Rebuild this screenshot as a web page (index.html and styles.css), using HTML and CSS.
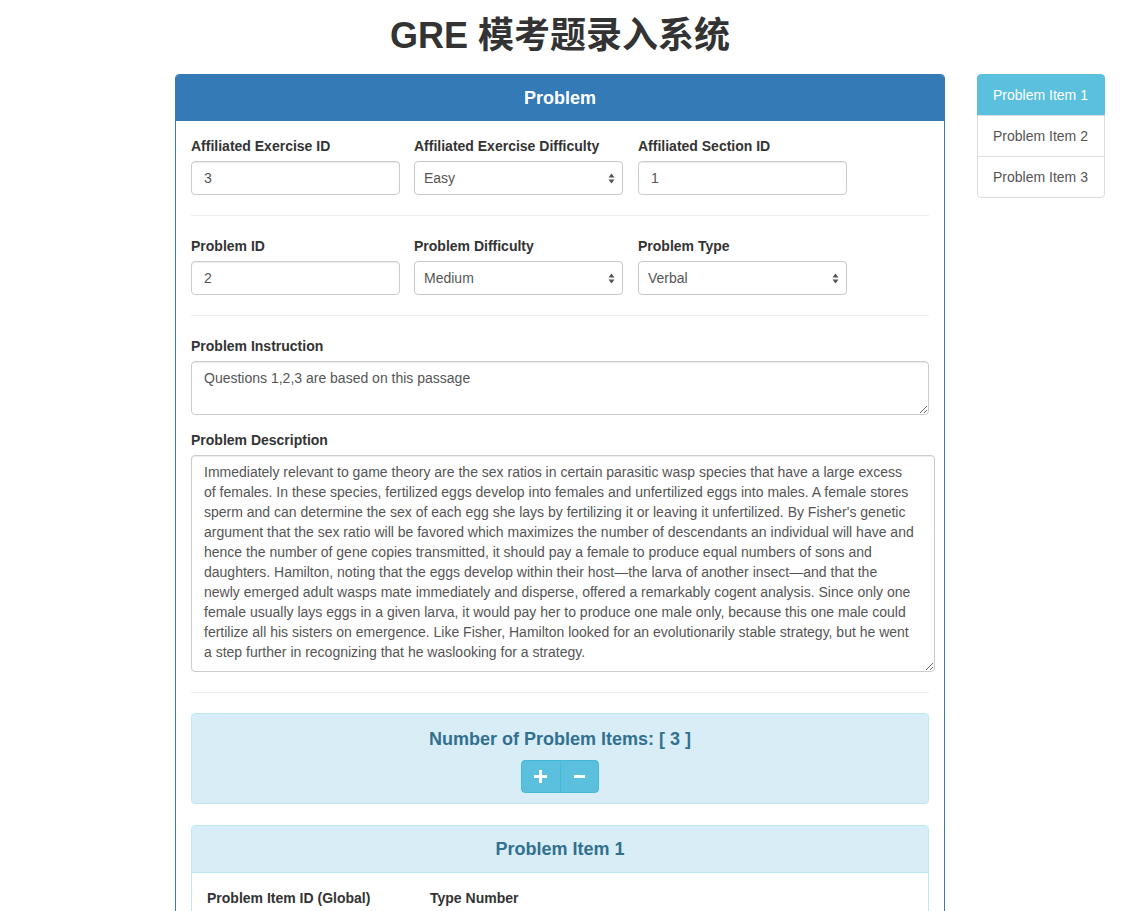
FILE: index.html
```html
<!DOCTYPE html>
<html lang="zh-CN">
<head>
<meta charset="utf-8">
<title>GRE 模考题录入系统</title>
<link rel="stylesheet" href="styles.css">
</head>
<body>
<div class="page">
  <div class="main">
    <h1 class="title">GRE 模考题录入系统</h1>
    <div class="panel panel-primary">
      <div class="panel-heading">Problem</div>
      <div class="panel-body">
        <div class="form-row">
          <div class="field">
            <label>Affiliated Exercise ID</label>
            <input class="form-control" type="text" value="3">
          </div>
          <div class="field">
            <label>Affiliated Exercise Difficulty</label>
            <div class="select-wrap">
              <select class="form-control select"><option>Easy</option></select>
              <svg class="arrows" width="7" height="11" viewBox="0 0 7 11"><path d="M3.5 0.5 L6.5 4.5 L0.5 4.5 Z M3.5 10.5 L6.5 6.5 L0.5 6.5 Z" fill="#555"/></svg>
            </div>
          </div>
          <div class="field">
            <label>Affiliated Section ID</label>
            <input class="form-control" type="text" value="1">
          </div>
        </div>
        <hr>
        <div class="form-row">
          <div class="field">
            <label>Problem ID</label>
            <input class="form-control" type="text" value="2">
          </div>
          <div class="field">
            <label>Problem Difficulty</label>
            <div class="select-wrap">
              <select class="form-control select"><option>Medium</option></select>
              <svg class="arrows" width="7" height="11" viewBox="0 0 7 11"><path d="M3.5 0.5 L6.5 4.5 L0.5 4.5 Z M3.5 10.5 L6.5 6.5 L0.5 6.5 Z" fill="#555"/></svg>
            </div>
          </div>
          <div class="field">
            <label>Problem Type</label>
            <div class="select-wrap">
              <select class="form-control select"><option>Verbal</option></select>
              <svg class="arrows" width="7" height="11" viewBox="0 0 7 11"><path d="M3.5 0.5 L6.5 4.5 L0.5 4.5 Z M3.5 10.5 L6.5 6.5 L0.5 6.5 Z" fill="#555"/></svg>
            </div>
          </div>
        </div>
        <hr>
        <div class="form-group">
          <label>Problem Instruction</label>
          <textarea class="form-control instruction" spellcheck="false">Questions 1,2,3 are based on this passage</textarea>
        </div>
        <div class="form-group last">
          <label>Problem Description</label>
          <textarea class="form-control description" spellcheck="false">Immediately relevant to game theory are the sex ratios in certain parasitic wasp species that have a large excess
of females. In these species, fertilized eggs develop into females and unfertilized eggs into males. A female stores
sperm and can determine the sex of each egg she lays by fertilizing it or leaving it unfertilized. By Fisher's genetic
argument that the sex ratio will be favored which maximizes the number of descendants an individual will have and
hence the number of gene copies transmitted, it should pay a female to produce equal numbers of sons and
daughters. Hamilton, noting that the eggs develop within their host—the larva of another insect—and that the
newly emerged adult wasps mate immediately and disperse, offered a remarkably cogent analysis. Since only one
female usually lays eggs in a given larva, it would pay her to produce one male only, because this one male could
fertilize all his sisters on emergence. Like Fisher, Hamilton looked for an evolutionarily stable strategy, but he went
a step further in recognizing that he waslooking for a strategy.</textarea>
        </div>
        <hr>
        <div class="info-box">
          <div class="info-title">Number of Problem Items: [ 3 ]</div>
          <div class="btn-group">
            <button class="btn-info" type="button" aria-label="add">
              <svg width="13" height="13" viewBox="0 0 13 13"><path d="M5 0h3v5h5v3H8v5H5V8H0V5h5z" fill="#fff"/></svg>
            </button>
            <button class="btn-info" type="button" aria-label="remove">
              <svg width="11" height="3" viewBox="0 0 11 3"><rect width="11" height="3" fill="#fff"/></svg>
            </button>
          </div>
        </div>
        <div class="panel panel-info">
          <div class="panel-heading info-heading">Problem Item 1</div>
          <div class="panel-body">
            <div class="form-row">
              <div class="field">
                <label>Problem Item ID (Global)</label>
                <input class="form-control" type="text" value="7">
              </div>
              <div class="field">
                <label>Type Number</label>
                <input class="form-control" type="text" value="1">
              </div>
            </div>
          </div>
        </div>
      </div>
    </div>
  </div>
  <div class="sidebar">
    <a class="list-item active" href="#item1">Problem Item 1</a>
    <a class="list-item" href="#item2">Problem Item 2</a>
    <a class="list-item" href="#item3">Problem Item 3</a>
  </div>
</div>
</body>
</html>
```
FILE: styles.css
```css
* { box-sizing: border-box; }
html, body {
  margin: 0;
  padding: 0;
  background: #fff;
}
body {
  font-family: "Liberation Sans", Arial, "Noto Sans CJK SC", sans-serif;
  font-size: 14px;
  line-height: 20px;
  color: #333;
}
.page {
  display: flex;
  align-items: flex-start;
  gap: 32px;
  padding-left: 175px;
}
.main {
  width: 770px;
  flex: none;
}
.title {
  margin: 0 0 18px;
  padding-top: 16px;
  font-size: 36px;
  line-height: 40px;
  font-weight: 700;
  text-align: center;
  color: #333;
  font-family: "Liberation Sans", Arial, "Noto Sans CJK SC", sans-serif;
}
.sidebar {
  margin-top: 74px;
  width: 128px;
  flex: none;
  display: flex;
  flex-direction: column;
}
.list-item {
  display: block;
  padding: 10px 15px;
  margin-bottom: -1px;
  border: 1px solid #ddd;
  background: #fff;
  color: #555;
  text-decoration: none;
  line-height: 20px;
}
.list-item:first-child {
  border-top-left-radius: 4px;
  border-top-right-radius: 4px;
}
.list-item:last-child {
  border-bottom-left-radius: 4px;
  border-bottom-right-radius: 4px;
}
.list-item.active {
  background: #5bc0de;
  border-color: #5bc0de;
  color: #fff;
}
.panel {
  border: 1px solid #337ab7;
  border-radius: 4px;
  background: #fff;
}
.panel-heading {
  height: 46px;
  line-height: 46px;
  text-align: center;
  font-size: 18px;
  font-weight: 700;
  color: #fff;
  background: #337ab7;
  border-top-left-radius: 3px;
  border-top-right-radius: 3px;
}
.panel-body {
  padding: 15px;
}
.form-row {
  display: flex;
}
.field {
  width: 209px;
  flex: none;
}
.field + .field {
  margin-left: 14px;
}
.field + .field + .field {
  margin-left: 15px;
}
label {
  display: block;
  font-weight: 700;
  margin-bottom: 5px;
  line-height: 20px;
}
.form-control {
  display: block;
  width: 100%;
  height: 34px;
  padding: 6px 12px;
  font-family: inherit;
  font-size: 14px;
  line-height: 20px;
  color: #555;
  background: #fff;
  border: 1px solid #ccc;
  border-radius: 4px;
  box-shadow: inset 0 1px 1px rgba(0,0,0,.075);
  margin: 0;
}
.select-wrap {
  position: relative;
}
.select {
  -webkit-appearance: none;
  appearance: none;
  padding-left: 9px;
  box-shadow: none;
  border-color: #c8c8c8;
}
.arrows {
  position: absolute;
  right: 8px;
  top: 12px;
  pointer-events: none;
}
hr {
  margin: 20px 0;
  border: 0;
  border-top: 1px solid #eee;
  height: 0;
}
.form-group {
  margin-bottom: 15px;
}
.form-group.last {
  margin-bottom: 0;
}
textarea.form-control {
  height: auto;
  resize: both;
}
.instruction {
  height: 54px !important;
  width: 738px;
}
.description {
  height: 217px !important;
  width: 744px;
  white-space: pre;
  overflow: hidden;
}
.info-box {
  background: #d9edf7;
  border: 1px solid #bce8f1;
  border-radius: 4px;
  padding: 15px 15px 10px;
  text-align: center;
  margin-bottom: 21px;
}
.info-title {
  font-size: 18px;
  font-weight: 700;
  line-height: 20px;
  color: #31708f;
  margin-bottom: 11px;
}
.btn-group {
  display: inline-flex;
  vertical-align: top;
}
.btn-info {
  width: 39.5px;
  height: 33px;
  padding: 0;
  display: flex;
  align-items: center;
  justify-content: center;
  background: #5bc0de;
  border: 1px solid #46b8da;
  color: #fff;
  cursor: pointer;
}
.btn-info:first-child {
  border-radius: 4px 0 0 4px;
}
.btn-info:last-child {
  border-radius: 0 4px 4px 0;
  margin-left: -1px;
}
.panel-info {
  border-color: #bce8f1;
}
.info-heading {
  background: #d9edf7;
  color: #31708f;
  border-bottom: 1px solid #bce8f1;
  height: 47px;
}
.panel-info .panel-body {
  padding-bottom: 40px;
}
```
